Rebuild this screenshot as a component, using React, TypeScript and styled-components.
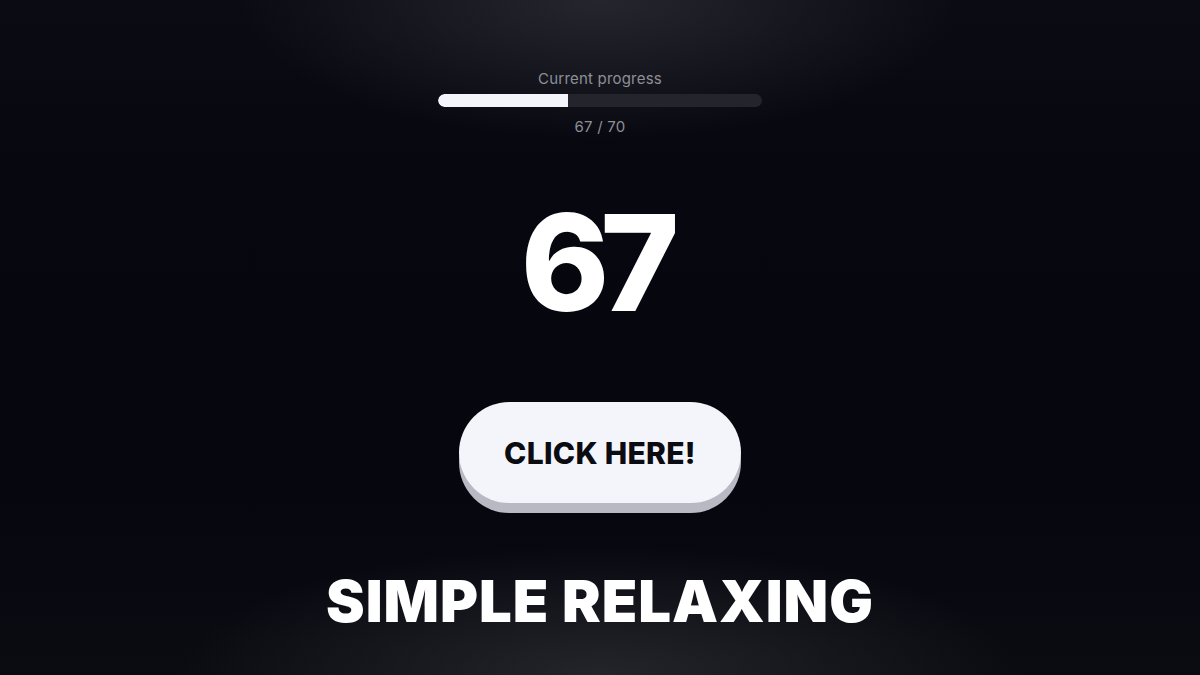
import React, { useState } from "react";
import styled, { createGlobalStyle } from "styled-components";

const GOAL = 70;

const GlobalStyle = createGlobalStyle`
  html, body {
    margin: 0;
    padding: 0;
    background: #05060e;
  }
  * {
    box-sizing: border-box;
  }
`;

const Page = styled.main`
  min-height: 100vh;
  display: flex;
  flex-direction: column;
  align-items: center;
  padding-top: 69px;
  font-family: "Inter", "Open Sans", sans-serif;
  background:
    radial-gradient(ellipse 360px 140px at 50% 0%, rgba(42, 43, 50, 0.85), rgba(42, 43, 50, 0) 100%),
    radial-gradient(ellipse 420px 130px at 50% 100%, rgba(40, 41, 47, 0.85), rgba(40, 41, 47, 0) 100%),
    linear-gradient(180deg, #0b0c13 0%, #06070f 25%, #05060e 70%, #0b0c12 100%);
`;

const Progress = styled.section`
  display: flex;
  flex-direction: column;
  align-items: center;
  width: 324px;
`;

const Caption = styled.span`
  font-size: 15px;
  line-height: 20px;
  color: #8e8f98;
  letter-spacing: 0.2px;
`;

const Track = styled.div`
  margin: 5px 0 10px;
  width: 100%;
  height: 13px;
  border-radius: 7px;
  background: #23242c;
  overflow: hidden;
`;

const Fill = styled.div`
  height: 100%;
  background: #f4f5fb;
  border-radius: 7px 0 0 7px;
`;

const Counter = styled.div`
  margin-top: 58px;
  font-size: 134px;
  line-height: 1;
  font-weight: 800;
  color: #ffffff;
  letter-spacing: -9px;
  padding-right: 9px;
`;

const ClickButton = styled.button`
  margin-top: 73px;
  width: 282px;
  height: 101px;
  border: none;
  border-radius: 51px;
  background: #f4f5fb;
  box-shadow: 0 10px 0 #b8b9c3;
  color: #0b0b12;
  font-family: "Inter", "Open Sans", sans-serif;
  font-size: 30px;
  font-weight: 800;
  letter-spacing: 0.3px;
  cursor: pointer;
`;

const Headline = styled.h1`
  margin: 69px 0 0;
  font-size: 58px;
  line-height: 1;
  font-weight: 900;
  color: #ffffff;
  letter-spacing: 1px;
`;

export default function App() {
  const [clicks, setClicks] = useState(67);
  const shown = 40;

  return (
    <Page>
      <GlobalStyle />
      <Progress>
        <Caption>Current progress</Caption>
        <Track>
          <Fill style={{ width: `${shown}%` }} />
        </Track>
        <Caption>
          {clicks} / {GOAL}
        </Caption>
      </Progress>
      <Counter>{clicks}</Counter>
      <ClickButton onClick={() => setClicks((c) => c + 1)}>CLICK HERE!</ClickButton>
      <Headline>SIMPLE RELAXING</Headline>
    </Page>
  );
}
